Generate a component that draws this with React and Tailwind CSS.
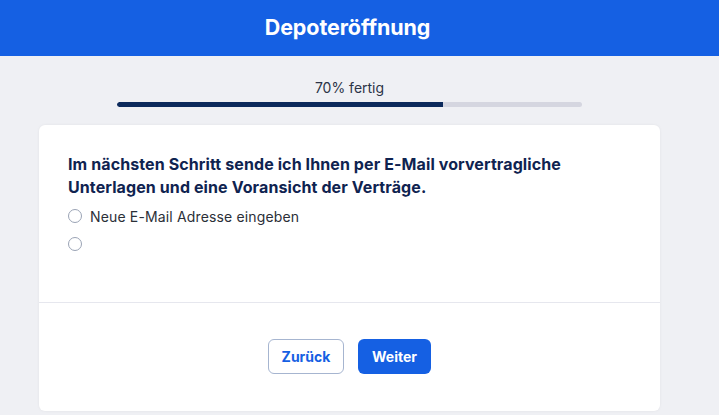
export default function App() {
  return (
    <div className="min-h-screen bg-[#eff0f4]" style={{ fontFamily: "Inter, 'Noto Sans', sans-serif" }}>
      <header className="h-[56px] bg-[#1560e3] flex items-center justify-center pr-[24px]">
        <h1 className="text-[21.5px] font-bold text-white leading-none tracking-[-0.1px]">Depoteröffnung</h1>
      </header>
      <div className="w-[699px] flex flex-col items-center">
        <div className="mt-[24px] text-[14px] leading-[16px] text-[#2b3447]">70% fertig</div>
        <div className="mt-[6px] w-[465px] h-[5px] rounded-full bg-[#d5d6e0] overflow-hidden">
          <div className="h-full bg-[#0c2a5c] rounded-l-full" style={{ width: "70%" }} />
        </div>
        <div className="mt-[18px] w-[621px] bg-white rounded-[6px] shadow-[0_0_3px_rgba(0,0,0,0.06)]">
          <div className="px-[29px] pt-[28px] pb-[49px]">
            <p className="text-[16px] font-bold leading-[23px] text-[#0f2350] whitespace-nowrap tracking-[0.1px]">
              Im nächsten Schritt sende ich Ihnen per E-Mail vorvertragliche
              <br />
              Unterlagen und eine Voransicht der Verträge.
            </p>
            <div className="mt-[8px] flex flex-col gap-[10px]">
              <label className="flex items-center gap-[8px] h-[18px]">
                <span className="w-[14px] h-[14px] rounded-full border border-[#9aa3b5] bg-white" />
                <span className="text-[14px] text-[#2b2f38] tracking-[0.15px]">Neue E-Mail Adresse eingeben</span>
              </label>
              <label className="flex items-center gap-[8px] h-[18px]">
                <span className="w-[14px] h-[14px] rounded-full border border-[#9aa3b5] bg-white" />
              </label>
            </div>
          </div>
          <div className="border-t border-[#e6e7ee] flex justify-center gap-[14px] pt-[36px] pb-[37px]">
            <button className="w-[76px] h-[35px] rounded-[6px] border border-[#a6b5d0] bg-white text-[#1560e3] text-[14px] font-bold">Zurück</button>
            <button className="w-[73px] h-[35px] rounded-[6px] bg-[#1560e3] text-white text-[14px] font-bold">Weiter</button>
          </div>
        </div>
      </div>
    </div>
  );
}
